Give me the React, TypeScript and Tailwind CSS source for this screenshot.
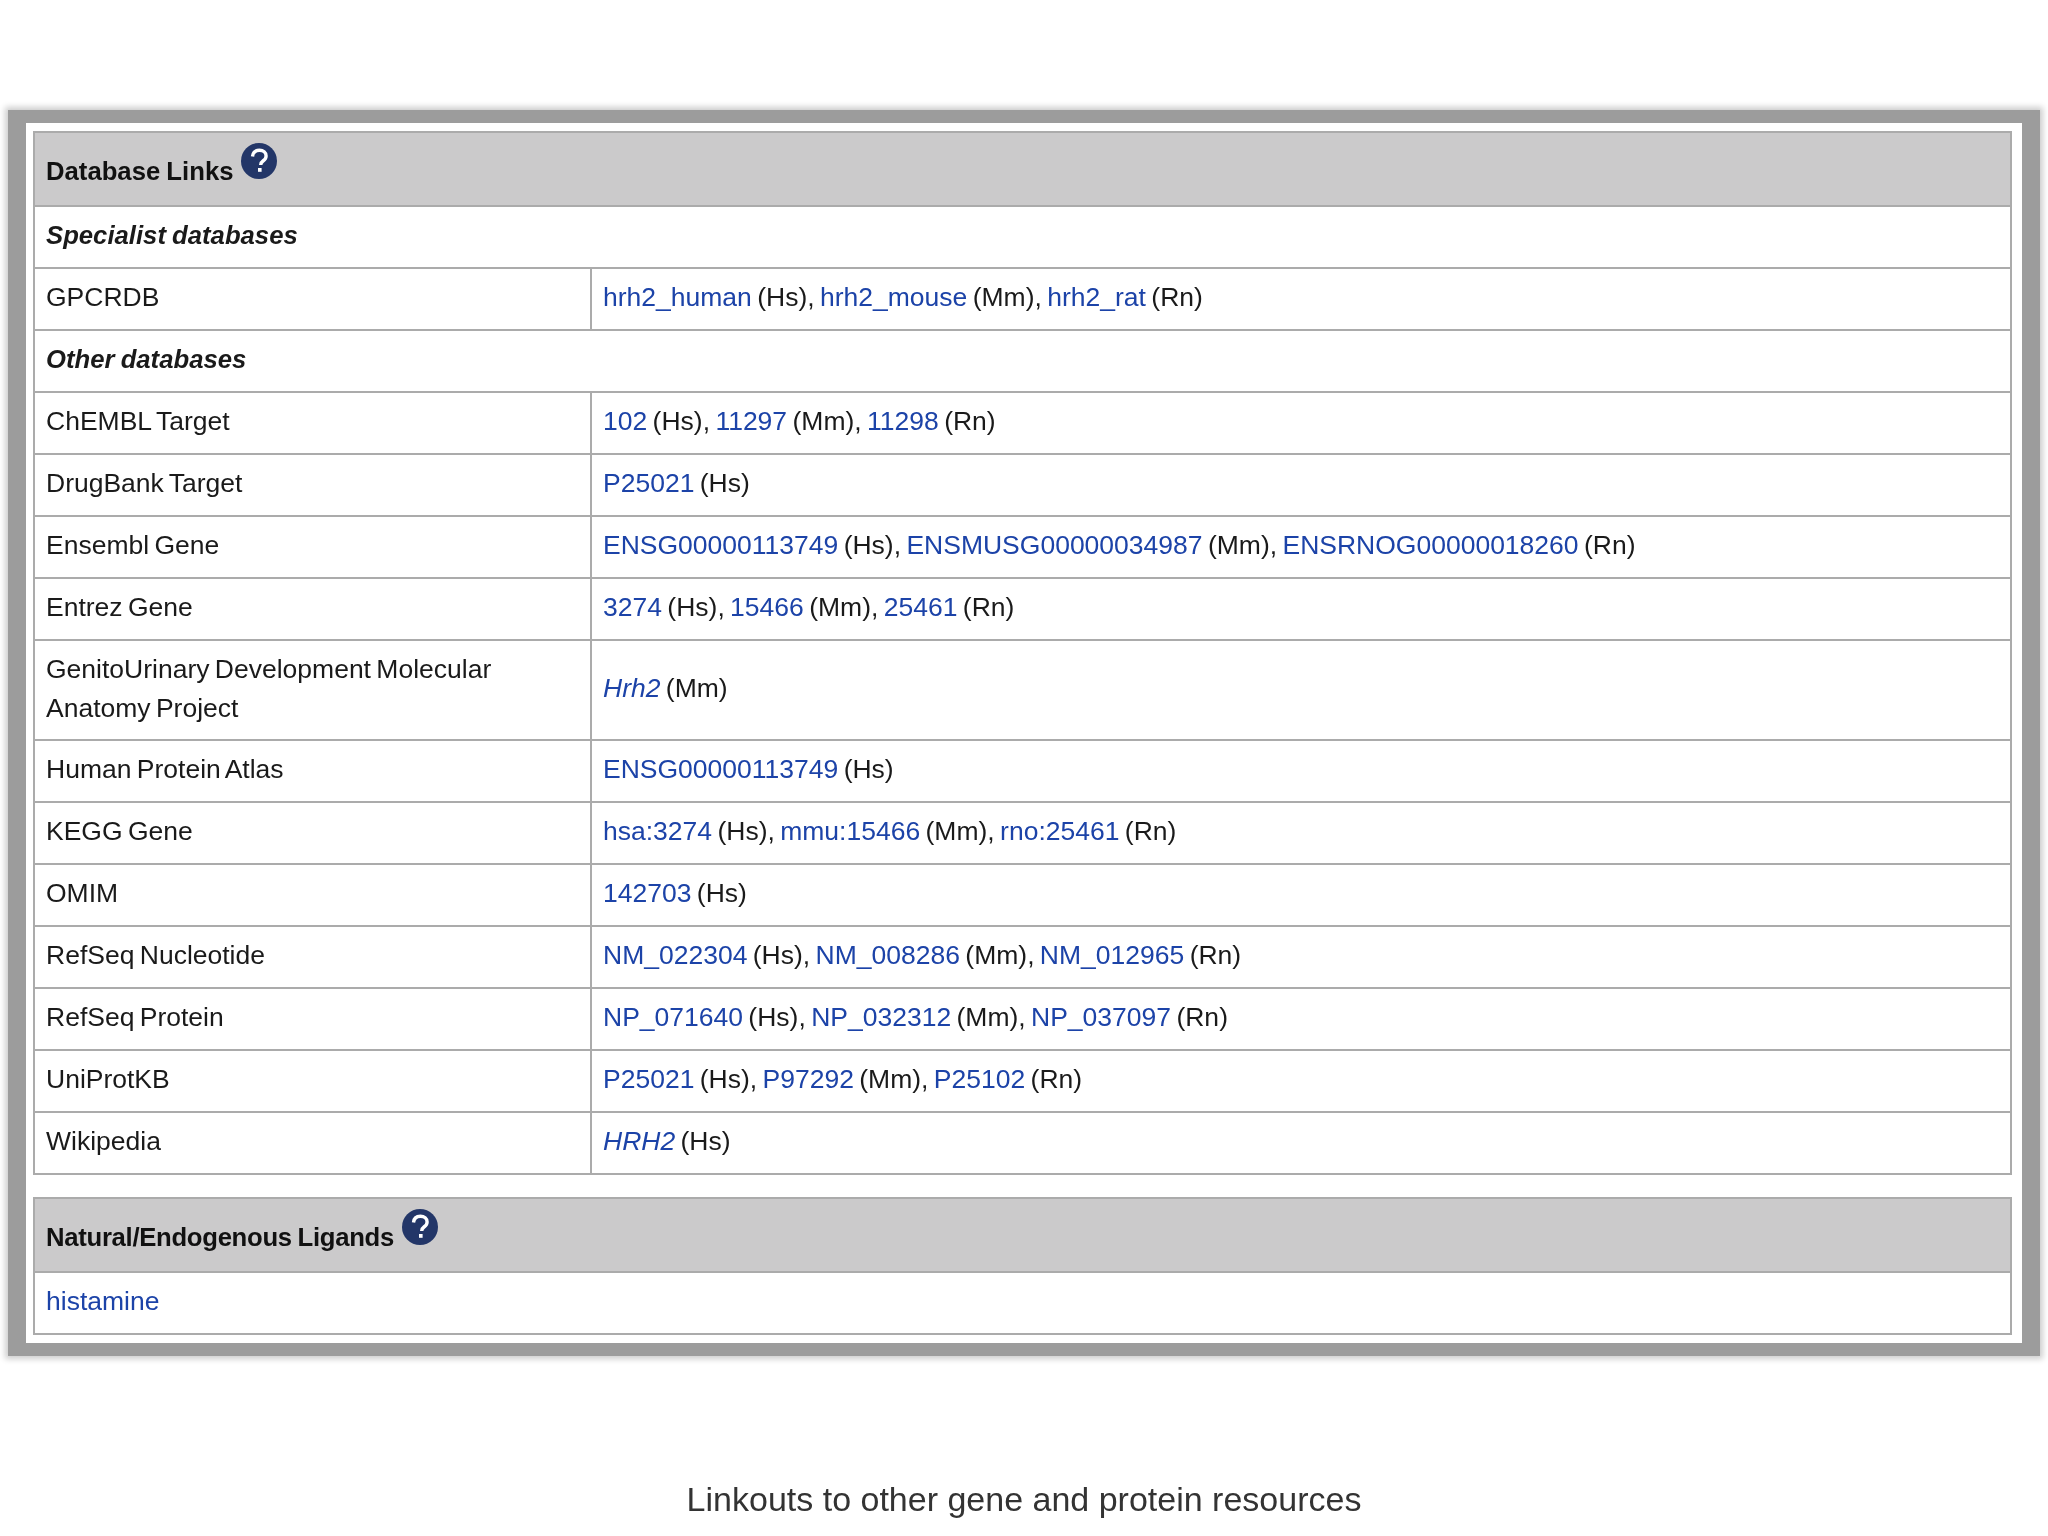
import type { ReactNode } from "react";

type Ref = { id: string; sp: string; italic?: boolean };
type Row = { label: ReactNode; refs: Ref[] };

const sans = "font-['Liberation_Sans',Arial,sans-serif]";

const otherRows: Row[] = [
  { label: "ChEMBL Target", refs: [{ id: "102", sp: "Hs" }, { id: "11297", sp: "Mm" }, { id: "11298", sp: "Rn" }] },
  { label: "DrugBank Target", refs: [{ id: "P25021", sp: "Hs" }] },
  {
    label: "Ensembl Gene",
    refs: [
      { id: "ENSG00000113749", sp: "Hs" },
      { id: "ENSMUSG00000034987", sp: "Mm" },
      { id: "ENSRNOG00000018260", sp: "Rn" },
    ],
  },
  { label: "Entrez Gene", refs: [{ id: "3274", sp: "Hs" }, { id: "15466", sp: "Mm" }, { id: "25461", sp: "Rn" }] },
  {
    label: (
      <div className="leading-[38.5px]">
        GenitoUrinary Development Molecular
        <br />
        Anatomy Project
      </div>
    ),
    refs: [{ id: "Hrh2", sp: "Mm", italic: true }],
  },
  { label: "Human Protein Atlas", refs: [{ id: "ENSG00000113749", sp: "Hs" }] },
  { label: "KEGG Gene", refs: [{ id: "hsa:3274", sp: "Hs" }, { id: "mmu:15466", sp: "Mm" }, { id: "rno:25461", sp: "Rn" }] },
  { label: "OMIM", refs: [{ id: "142703", sp: "Hs" }] },
  { label: "RefSeq Nucleotide", refs: [{ id: "NM_022304", sp: "Hs" }, { id: "NM_008286", sp: "Mm" }, { id: "NM_012965", sp: "Rn" }] },
  { label: "RefSeq Protein", refs: [{ id: "NP_071640", sp: "Hs" }, { id: "NP_032312", sp: "Mm" }, { id: "NP_037097", sp: "Rn" }] },
  { label: "UniProtKB", refs: [{ id: "P25021", sp: "Hs" }, { id: "P97292", sp: "Mm" }, { id: "P25102", sp: "Rn" }] },
  { label: "Wikipedia", refs: [{ id: "HRH2", sp: "Hs", italic: true }] },
];

const cell = "border-2 border-[#ababab] px-[11px] pt-[9px] pb-[12px] align-middle";

const HelpIcon = () => (
  <svg viewBox="0 0 36 36" className="ml-2 inline-block h-[36px] w-[36px] align-[1px]">
    <circle cx="18" cy="18" r="18" fill="#233668" />
    <path
      d="M11.5 13.5c.4-4 3.200-6.200 6.900-6.200 3.900 0 6.700 2.300 6.700 5.600 0 2.500-1.300 3.800-3.100 5.100-1.700 1.200-2.300 2-2.300 3.900"
      fill="none"
      stroke="#ffffff"
      strokeWidth="3.400"
    />
    <rect x="17" y="25" width="3.600" height="3.800" fill="#ffffff" />
  </svg>
);

const Refs = ({ refs }: { refs: Ref[] }) => (
  <>
    {refs.map((r, i) => (
      <span key={r.id + r.sp}>
        <a href="#" className={`text-[#1c43a8] ${r.italic ? "italic" : ""}`}>
          {r.id}
        </a>{" "}
        ({r.sp}){i < refs.length - 1 ? ", " : ""}
      </span>
    ))}
  </>
);

const HeaderRow = ({ title, tight }: { title: string; tight?: boolean }) => (
  <tr className="h-[74px] bg-[#cbcacb]">
    <td
      colSpan={2}
      className={`${cell} !pt-[8px] text-[25.7px] font-bold [word-spacing:-1px] text-[#111] ${tight ? "tracking-[-0.3px]" : ""}`}
    >
      {title}
      <HelpIcon />
    </td>
  </tr>
);

const SectionRow = ({ title }: { title: string }) => (
  <tr>
    <td colSpan={2} className={`${cell} text-[25.7px] font-bold italic [word-spacing:-1px]`}>
      {title}
    </td>
  </tr>
);

const DataRow = ({ row }: { row: Row }) => (
  <tr>
    <td className={cell}>{row.label}</td>
    <td className={cell}>
      <Refs refs={row.refs} />
    </td>
  </tr>
);

const App = () => {
  return (
    <div className={`h-[1536px] w-[2048px] overflow-hidden bg-white pt-[110px] blur-[0.4px] ${sans} text-[26.5px] leading-[39px] [word-spacing:-2px] text-[#1a1a1a]`}>
      <div className="mx-[8px] border-x-[18px] border-y-[13px] border-[#9c9c9c] bg-white pt-[8px] pr-[10px] pb-[8px] pl-[7px] shadow-[0_0_6px_3px_rgba(0,0,0,0.2)]">
        <table className="w-full table-fixed border-collapse">
          <colgroup>
            <col className="w-[557px]" />
            <col />
          </colgroup>
          <tbody>
            <HeaderRow title="Database Links" />
            <SectionRow title="Specialist databases" />
            <DataRow
              row={{
                label: "GPCRDB",
                refs: [
                  { id: "hrh2_human", sp: "Hs" },
                  { id: "hrh2_mouse", sp: "Mm" },
                  { id: "hrh2_rat", sp: "Rn" },
                ],
              }}
            />
            <SectionRow title="Other databases" />
            {otherRows.map((row, i) => (
              <DataRow key={i} row={row} />
            ))}
          </tbody>
        </table>

        <table className="mt-[22px] w-full table-fixed border-collapse">
          <tbody>
            <HeaderRow title="Natural/Endogenous Ligands" tight />
            <tr>
              <td colSpan={2} className={cell}>
                <a href="#" className="text-[#1c43a8]">
                  histamine
                </a>
              </td>
            </tr>
          </tbody>
        </table>
      </div>

      <p className="mt-[121px] text-center text-[34px] leading-[44px] [word-spacing:0px] text-[#333]">
        Linkouts to other gene and protein resources
      </p>
    </div>
  );
};

export default App;
